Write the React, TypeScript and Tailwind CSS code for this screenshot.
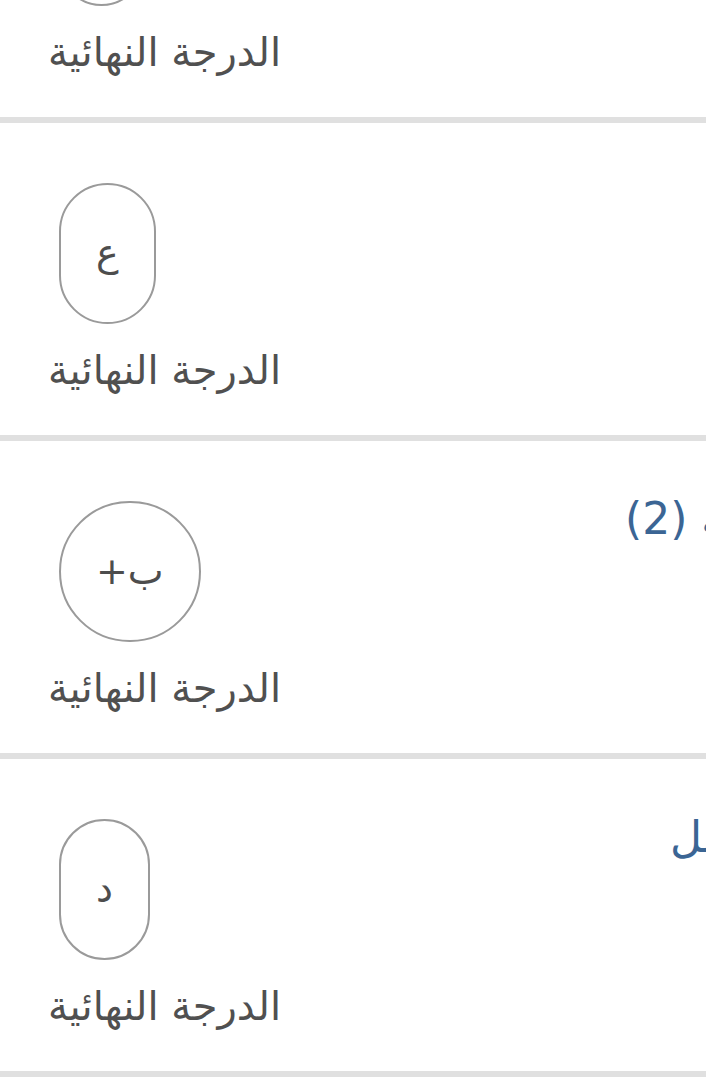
const rows = [
  { title: "مقرر اللغة الإنجليزية", grade: "أ", titleOffset: "ml-[760px]" },
  { title: "مقرر الرياضيات", grade: "ع", titleOffset: "ml-[760px]" },
  { title: "مهارات الكتابة العربية (2)", grade: "ب+", titleOffset: "ml-0" },
  { title: "مهارات التواصل", grade: "د", titleOffset: "ml-[45px]" },
];

const GradeRow = ({
  title,
  grade,
  titleOffset,
}: {
  title: string;
  grade: string;
  titleOffset: string;
}) => {
  return (
    <div className="border-b-[6px] border-[#e0e0e0] bg-white">
      <div className="flex h-[312px]">
        <div className="flex w-[625px] shrink-0 flex-col items-start pl-[48px] pt-[60px]">
          <div className="ml-[11px] flex h-[141px] items-center justify-center rounded-full border-2 border-[#9a9a9a] px-[35px] text-[38px] text-[#4d4d4d]">
            <span dir="rtl">{grade}</span>
          </div>
          <div
            dir="rtl"
            className="mt-[22px] text-[40px] leading-[48px] text-[#505050]"
          >
            الدرجة النهائية
          </div>
        </div>
        <div className="min-w-0 flex-1 pt-[52px]">
          <div
            className={`whitespace-nowrap text-[44px] leading-[52px] text-[#3b6594] ${titleOffset}`}
          >
            <span dir="rtl">{title}</span>
          </div>
        </div>
      </div>
    </div>
  );
};

const App = () => {
  return (
    <div
      className="h-[1082px] w-[706px] overflow-hidden bg-white"
      style={{ fontFamily: '"DejaVu Sans", "Liberation Sans", sans-serif' }}
    >
      <div className="-mt-[195px]">
        {rows.map((row) => (
          <GradeRow key={row.title} {...row} />
        ))}
      </div>
    </div>
  );
};

export default App;
